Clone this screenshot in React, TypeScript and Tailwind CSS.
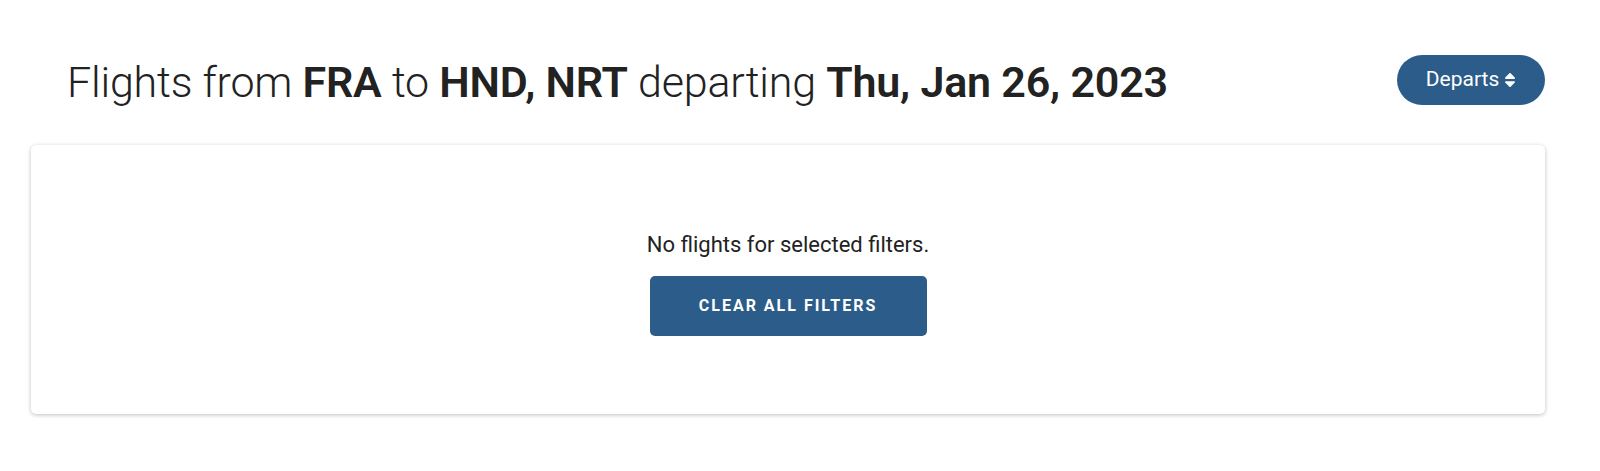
export default function App() {
  return (
    <div className="min-h-[471px] bg-white pl-[31px] pr-[55px] pt-[53px] font-['Roboto',sans-serif] text-[#222]">
      <div className="flex items-center justify-between">
        <h1 className="pl-[36px] pt-[4px] text-[43px] font-light leading-[50px] tracking-[-0.2px]">
          Flights from <span className="font-semibold">FRA</span> to{" "}
          <span className="font-semibold">HND, NRT</span> departing{" "}
          <span className="font-semibold">Thu, Jan 26, 2023</span>
        </h1>
        <button className="flex h-[50px] w-[148px] items-center justify-center gap-[5px] rounded-full bg-[#2c5d8a] text-[21px] text-white">
          Departs
          <svg viewBox="0 0 320 512" className="h-[18px] w-[12px]" fill="currentColor">
            <path d="M41 288h238c21.4 0 32.1 25.9 17 41L177 448c-9.4 9.4-24.6 9.4-33.9 0L24 329c-15.1-15.1-4.4-41 17-41zm255-105L177 64c-9.4-9.4-24.6-9.4-33.9 0L24 183c-15.1 15.1-4.4 41 17 41h238c21.4 0 32.1-25.9 17-41z" />
          </svg>
        </button>
      </div>
      <div className="mt-[38px] flex h-[269px] flex-col items-center justify-center gap-[18px] rounded-[5px] bg-white pt-[8px] shadow-[0_1px_4px_rgba(0,0,0,0.25)]">
        <p className="text-[22px] leading-[27px]">No flights for selected filters.</p>
        <button className="h-[60px] w-[277px] rounded-[5px] bg-[#2c5d8a] text-[16px] font-bold tracking-[2px] text-white">
          CLEAR ALL FILTERS
        </button>
      </div>
    </div>
  );
}
